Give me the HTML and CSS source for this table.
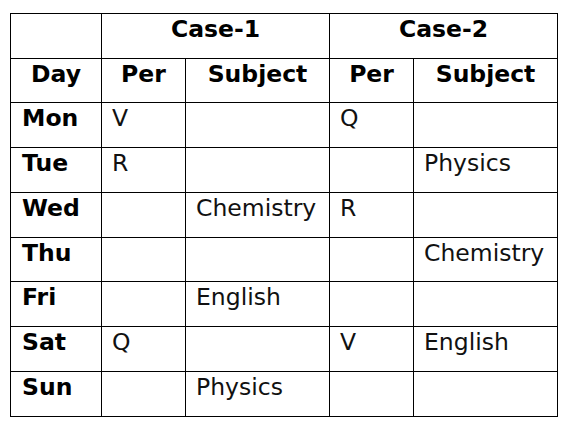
FILE: index.html
```html
<!DOCTYPE html>
<html>
<head>
<meta charset="utf-8">
<link rel="stylesheet" href="styles.css">
</head>
<body>
<table class="grid">
  <colgroup>
    <col class="c-day"><col class="c-per"><col class="c-sub"><col class="c-per"><col class="c-sub">
  </colgroup>
  <tr class="r45">
    <th></th>
    <th colspan="2">Case-1</th>
    <th colspan="2">Case-2</th>
  </tr>
  <tr class="r44">
    <th>Day</th><th>Per</th><th>Subject</th><th>Per</th><th>Subject</th>
  </tr>
  <tr class="r45"><td class="day">Mon</td><td>V</td><td></td><td>Q</td><td></td></tr>
  <tr class="r45"><td class="day">Tue</td><td>R</td><td></td><td></td><td>Physics</td></tr>
  <tr class="r45"><td class="day">Wed</td><td></td><td>Chemistry</td><td>R</td><td></td></tr>
  <tr class="r44"><td class="day">Thu</td><td></td><td></td><td></td><td>Chemistry</td></tr>
  <tr class="r45"><td class="day">Fri</td><td></td><td>English</td><td></td><td></td></tr>
  <tr class="r45"><td class="day">Sat</td><td>Q</td><td></td><td>V</td><td>English</td></tr>
  <tr class="r45"><td class="day">Sun</td><td></td><td>Physics</td><td></td><td></td></tr>
</table>
</body>
</html>
```
FILE: styles.css
```css
html, body {
  margin: 0;
  padding: 0;
  background: #fff;
}
body {
  font-family: "DejaVu Sans", Verdana, sans-serif;
  font-size: 23.5px;
  color: #000;
}
.grid {
  border-collapse: collapse;
  table-layout: fixed;
  width: 548px;
  margin: 13px 0 0 10px;
}
.c-day { width: 91px; }
.c-per { width: 84px; }
.c-sub { width: 144px; }
.grid th, .grid td {
  border: 1px solid #000;
  padding: 1px 0 0 10px;
  vertical-align: top;
  text-align: left;
  white-space: nowrap;
  line-height: normal;
}
.grid th {
  text-align: center;
  padding-left: 0;
  font-weight: bold;
}
.grid td {
  color: #111;
}
.grid td.day {
  font-weight: bold;
  color: #000;
  padding-left: 11px;
}
.r45 { height: 45px; }
.r44 { height: 44px; }
```
